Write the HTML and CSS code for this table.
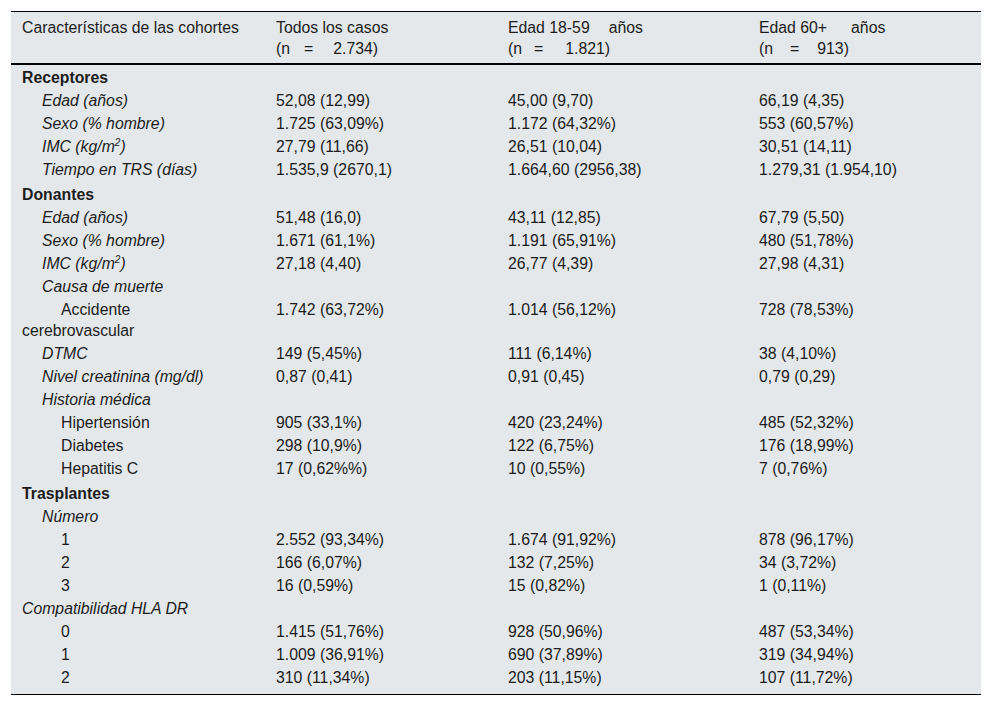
FILE: index.html
```html
<!DOCTYPE html>
<html lang="es">
<head>
<meta charset="utf-8">
<title>Características de las cohortes</title>
<link rel="stylesheet" href="styles.css">
</head>
<body>
<table class="cohort">
  <colgroup>
    <col class="c1"><col class="c2"><col class="c3"><col class="c4">
  </colgroup>
  <thead>
    <tr>
      <th>Características de las cohortes</th>
      <th>Todos los casos<br>(n<span class="sp w14"></span>=<span class="sp w20"></span>2.734)</th>
      <th>Edad 18-59<span class="sp w19"></span>años<br>(n<span class="sp w12"></span>=<span class="sp w22"></span>1.821)</th>
      <th>Edad 60+<span class="sp w24"></span>años<br>(n<span class="sp w17"></span>=<span class="sp w18"></span>913)</th>
    </tr>
  </thead>
  <tbody>
    <tr class="section first"><td><b>Receptores</b></td><td></td><td></td><td></td></tr>
    <tr><td class="l1"><i>Edad (años)</i></td><td>52,08 (12,99)</td><td>45,00 (9,70)</td><td>66,19 (4,35)</td></tr>
    <tr><td class="l1"><i>Sexo (% hombre)</i></td><td>1.725 (63,09%)</td><td>1.172 (64,32%)</td><td>553 (60,57%)</td></tr>
    <tr><td class="l1"><i>IMC (kg/m<sup>2</sup>)</i></td><td>27,79 (11,66)</td><td>26,51 (10,04)</td><td>30,51 (14,11)</td></tr>
    <tr><td class="l1"><i>Tiempo en TRS (días)</i></td><td>1.535,9 (2670,1)</td><td>1.664,60 (2956,38)</td><td>1.279,31 (1.954,10)</td></tr>

    <tr class="section"><td><b>Donantes</b></td><td></td><td></td><td></td></tr>
    <tr><td class="l1"><i>Edad (años)</i></td><td>51,48 (16,0)</td><td>43,11 (12,85)</td><td>67,79 (5,50)</td></tr>
    <tr><td class="l1"><i>Sexo (% hombre)</i></td><td>1.671 (61,1%)</td><td>1.191 (65,91%)</td><td>480 (51,78%)</td></tr>
    <tr><td class="l1"><i>IMC (kg/m<sup>2</sup>)</i></td><td>27,18 (4,40)</td><td>26,77 (4,39)</td><td>27,98 (4,31)</td></tr>
    <tr><td class="l1"><i>Causa de muerte</i></td><td></td><td></td><td></td></tr>
    <tr><td class="l2">Accidente<br>cerebrovascular</td><td>1.742 (63,72%)</td><td>1.014 (56,12%)</td><td>728 (78,53%)</td></tr>
    <tr><td class="l1"><i>DTMC</i></td><td>149 (5,45%)</td><td>111 (6,14%)</td><td>38 (4,10%)</td></tr>
    <tr><td class="l1"><i>Nivel creatinina (mg/dl)</i></td><td>0,87 (0,41)</td><td>0,91 (0,45)</td><td>0,79 (0,29)</td></tr>
    <tr><td class="l1"><i>Historia médica</i></td><td></td><td></td><td></td></tr>
    <tr><td class="l2">Hipertensión</td><td>905 (33,1%)</td><td>420 (23,24%)</td><td>485 (52,32%)</td></tr>
    <tr><td class="l2">Diabetes</td><td>298 (10,9%)</td><td>122 (6,75%)</td><td>176 (18,99%)</td></tr>
    <tr><td class="l2">Hepatitis C</td><td>17 (0,62%%)</td><td>10 (0,55%)</td><td>7 (0,76%)</td></tr>

    <tr class="section"><td><b>Trasplantes</b></td><td></td><td></td><td></td></tr>
    <tr><td class="l1"><i>Número</i></td><td></td><td></td><td></td></tr>
    <tr><td class="l2">1</td><td>2.552 (93,34%)</td><td>1.674 (91,92%)</td><td>878 (96,17%)</td></tr>
    <tr><td class="l2">2</td><td>166 (6,07%)</td><td>132 (7,25%)</td><td>34 (3,72%)</td></tr>
    <tr><td class="l2">3</td><td>16 (0,59%)</td><td>15 (0,82%)</td><td>1 (0,11%)</td></tr>
    <tr><td><i>Compatibilidad HLA DR</i></td><td></td><td></td><td></td></tr>
    <tr><td class="l2">0</td><td>1.415 (51,76%)</td><td>928 (50,96%)</td><td>487 (53,34%)</td></tr>
    <tr><td class="l2">1</td><td>1.009 (36,91%)</td><td>690 (37,89%)</td><td>319 (34,94%)</td></tr>
    <tr class="last"><td class="l2">2</td><td>310 (11,34%)</td><td>203 (11,15%)</td><td>107 (11,72%)</td></tr>
  </tbody>
</table>
</body>
</html>
```
FILE: styles.css
```css
html, body {
  margin: 0;
  padding: 0;
  background: #ffffff;
}

body {
  padding: 11px 0 0 11px;
  font-family: "Liberation Sans", Arial, Helvetica, sans-serif;
  font-size: 15.8px;
  color: #1c1c1c;
}

.cohort {
  width: 970px;
  border-collapse: collapse;
  table-layout: fixed;
  background: #e4e8eb;
  border-top: 1px solid #000;
  border-bottom: 1px solid #000;
}

.c1 { width: 254px; }
.c2 { width: 232px; }
.c3 { width: 251px; }
.c4 { width: 233px; }

.cohort th,
.cohort td {
  text-align: left;
  vertical-align: top;
  line-height: 21px;
  padding: 1px 4px 1px 11px;
  font-weight: normal;
  white-space: nowrap;
}

.cohort thead th {
  padding-top: 5px;
  padding-bottom: 4px;
  border-bottom: 2px solid #000;
}

.cohort .section td {
  padding-top: 3px;
}

.cohort .section.first td {
  padding-top: 2px;
}

.cohort .section b {
  font-weight: bold;
}

.cohort td.l1 {
  padding-left: 31px;
}

.cohort td.l2 {
  text-indent: 39px;
}

.cohort tr.last td {
  padding-bottom: 6px;
}

.sp {
  display: inline-block;
}
.w12 { width: 12px; }
.w14 { width: 14px; }
.w17 { width: 17px; }
.w18 { width: 18px; }
.w19 { width: 19px; }
.w20 { width: 20px; }
.w22 { width: 22px; }
.w24 { width: 24px; }

sup {
  font-size: 10px;
  line-height: 0;
  vertical-align: 6px;
}
```
